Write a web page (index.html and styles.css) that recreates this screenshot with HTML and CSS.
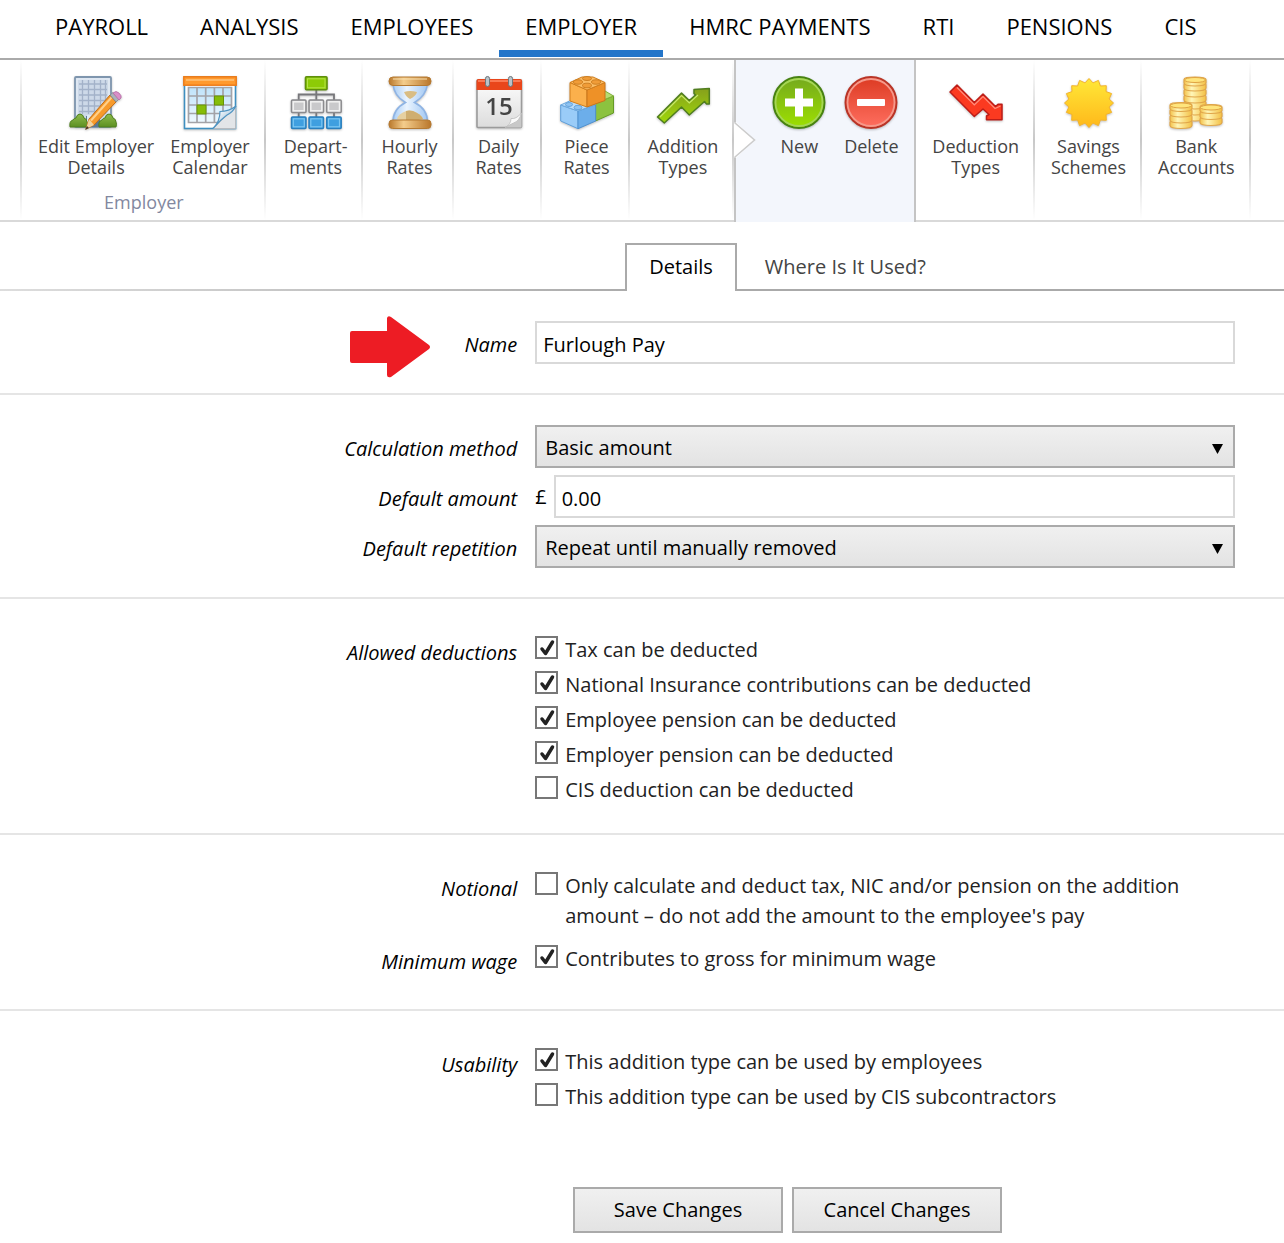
FILE: index.html
```html
<!DOCTYPE html>
<html lang="en">
<head>
    <meta charset="UTF-8">
    <meta name="viewport" content="width=device-width, initial-scale=1.0">
    <title>Addition Types</title>
    <link rel="stylesheet" href="styles.css">
</head>
<body>
    <!-- Main menu -->
    <nav class="main-nav">
        <a href="#">PAYROLL</a>
        <a href="#">ANALYSIS</a>
        <a href="#">EMPLOYEES</a>
        <a href="#" class="active">EMPLOYER</a>
        <a href="#">HMRC PAYMENTS</a>
        <a href="#">RTI</a>
        <a href="#">PENSIONS</a>
        <a href="#">CIS</a>
    </nav>

    <!-- Ribbon -->
    <div class="ribbon">
        <div class="group">
            <div class="group-items">
                <button type="button" class="tool">
                    <svg class="icon" viewBox="0 0 54 54" aria-hidden="true">
                        <defs>
                            <linearGradient id="bush" x1="0" y1="0" x2="0" y2="1"><stop offset="0" stop-color="#8fbc4c"/><stop offset="1" stop-color="#5c8f22"/></linearGradient>
                        </defs>
                        <rect x="6" y="1" width="36" height="50" rx="1" fill="#cdd9e8" stroke="#7f96ae" stroke-width="1.800"/>
                        <rect x="8" y="3" width="32" height="46" fill="none" stroke="#e4ecf5" stroke-width="1.500"/>
                        <path d="M10 8H38M10 13.500H38M10 19H38M10 24.500H38M10 30H38M10 35.500H38M13.500 4V38M19.500 4V38M25.500 4V38M31.500 4V38M36.500 4V38" stroke="#a3b2c9" stroke-width="1.300"/>
                        <path d="M17 40h14v11H17z" fill="#5b7892"/>
                        <path d="M18 39h6v9h-6z" fill="#dceaf6"/>
                        <path d="M1 51q-1-6 3-7q1-2 3-2q1-4 4-4q3 0 4 4q3 1 3 4q1 2 0 5z" fill="url(#bush)" stroke="#4f7f1e"/>
                        <path d="M30 51q-1-6 3-7q1-2 3-2q1-4 4-4q3 0 4 4q3 1 3 4q1 2 0 5z" fill="url(#bush)" stroke="#4f7f1e"/>
                        <path d="M41 19l6 7L25 49l-8 4l3-10z" fill="#f79a2b" stroke="#c06b14"/>
                        <path d="M42.500 21.500L22 44.500" stroke="#ffd08a" stroke-width="2"/>
                        <path d="M20 43l5 6l-8 4z" fill="#efd3a0"/>
                        <path d="M18 50l2 2l-4 2z" fill="#4a3a2a"/>
                        <path d="M41 19l3-2.500l6 6.500l-3 3z" fill="#a9b2ba" stroke="#7d868e" stroke-width=".8"/>
                        <path d="M44 17q3-3 6 0t2 5l-2 2z" fill="#d98fc8" stroke="#b56ba4" stroke-width=".8"/>
                    </svg>
                    <span>Edit Employer<br>Details</span>
                </button>
                <button type="button" class="tool">
                    <svg class="icon" viewBox="0 0 54 54" aria-hidden="true">
                        <defs>
                            <linearGradient id="cal" x1="0" y1="0" x2="0" y2="1"><stop offset="0" stop-color="#bfe3fa"/><stop offset="1" stop-color="#eef8ff"/></linearGradient>
                            <linearGradient id="curl" x1="0" y1="0" x2="1" y2="1"><stop offset=".2" stop-color="#fff"/><stop offset=".6" stop-color="#b5cfe3"/></linearGradient>
                        </defs>
                        <rect x="1.500" y="1" width="51" height="51.500" fill="#fff" stroke="#3f8fc0" stroke-width="1.600"/>
                        <rect x="5.500" y="11.500" width="43" height="35" fill="url(#cal)"/>
                        <path d="M5.500 11.500H48.500V46.500H5.500zM5.500 20H48.500M5.500 29H48.500M5.500 37.500H48.500M14 11.500V46.500M22.700 11.500V46.500M31.400 11.500V46.500M40 11.500V46.500" fill="none" stroke="#a3a3a8" stroke-width="1.700"/>
                        <rect x="14" y="29" width="9" height="9" fill="#86bd08" stroke="#669406"/>
                        <rect x="31.500" y="20" width="9" height="9" fill="#86bd08" stroke="#669406"/>
                        <rect x=".8" y=".8" width="52.400" height="8.400" fill="#ff9a2e" stroke="#ee7d1a" stroke-width="1.500"/>
                        <path d="M3 4H51" stroke="#ffc27a" stroke-width="1.500"/>
                        <path d="M52.500 31V52.500H30z" fill="#e2e5e8" stroke="#b6bbc0"/>
                        <path d="M30 52.500q7-7 7-17q9 0 16-5.500q-3 6-9 9q-7 5-14 13.500z" fill="url(#curl)" stroke="#4f94c2" stroke-width="1.200"/>
                    </svg>
                    <span>Employer<br>Calendar</span>
                </button>
            </div>
            <div class="group-caption">Employer</div>
        </div>
        <div class="group">
            <button type="button" class="tool">
                <svg class="icon" viewBox="0 0 54 54" aria-hidden="true">
                    <path d="M27.300 14v10M9.700 24v-5.500H45V24M9.700 36v5M27.300 36v5M45 36v5" fill="none" stroke="#77777b" stroke-width="1.800"/>
                    <rect x="16.500" y=".8" width="21.500" height="13" rx="1" fill="#8dcb06" stroke="#5f8f0c" stroke-width="1.600"/>
                    <rect x="18.500" y="2.800" width="17.500" height="9" fill="none" stroke="#b4e24a"/>
                    <g fill="#c9c9cb" stroke="#8b8b8e" stroke-width="1.500">
                        <rect x="2.500" y="24" width="14.500" height="12.500" rx="1"/>
                        <rect x="20" y="24" width="14.500" height="12.500" rx="1"/>
                        <rect x="37.700" y="24" width="14.500" height="12.500" rx="1"/>
                    </g>
                    <g fill="none" stroke="#f1f1f1" stroke-width="1.500">
                        <rect x="4.300" y="25.800" width="11" height="9"/>
                        <rect x="21.800" y="25.800" width="11" height="9"/>
                        <rect x="39.500" y="25.800" width="11" height="9"/>
                    </g>
                    <g fill="#3f9fe0" stroke="#2a7fbd" stroke-width="1.500">
                        <rect x="2.500" y="41" width="14.500" height="11.500" rx="1"/>
                        <rect x="20" y="41" width="14.500" height="11.500" rx="1"/>
                        <rect x="37.700" y="41" width="14.500" height="11.500" rx="1"/>
                    </g>
                    <g fill="none" stroke="#7cc6f2" stroke-width="1.200">
                        <rect x="4.300" y="42.800" width="11" height="8"/>
                        <rect x="21.800" y="42.800" width="11" height="8"/>
                        <rect x="39.500" y="42.800" width="11" height="8"/>
                    </g>
                </svg>
                <span>Depart-<br>ments</span>
            </button>
        </div>
        <div class="group">
            <button type="button" class="tool">
                <svg class="icon" viewBox="0 0 54 54" aria-hidden="true">
                    <defs>
                        <linearGradient id="wood" x1="0" y1="0" x2="1" y2="0"><stop offset="0" stop-color="#b9782c"/><stop offset=".35" stop-color="#f4cd8c"/><stop offset="1" stop-color="#b9762a"/></linearGradient>
                        <linearGradient id="glass" x1="0" y1="0" x2="1" y2="0"><stop offset="0" stop-color="#a9cdf5"/><stop offset=".4" stop-color="#eaf4ff"/><stop offset="1" stop-color="#a2c8f3"/></linearGradient>
                    </defs>
                    <path d="M10 8q1 12 12.500 18.500Q10 33 10 46H44.500q0-13-13-19.500Q43 20 44.500 8z" fill="url(#glass)" stroke="#8fb4e4" stroke-width="1.600"/>
                    <path d="M21 16q6-2 13 0q-1 4-7 7q-4-2-6-7z" fill="#d9bd84"/>
                    <path d="M14 43q1-5 9-8q3-1 7 0q8 3 10 8q-12 4-26 0z" fill="#e6d0a0"/>
                    <path d="M23 35q3-1 7 0q8 3 10 8q-8 2.500-17 2z" fill="#cfae70"/>
                    <rect x="6" y="1" width="42" height="8.500" rx="4" fill="url(#wood)" stroke="#b57a32"/>
                    <path d="M10 3H44" stroke="#fae0ae" stroke-width="1.200"/>
                    <rect x="6" y="44" width="42" height="8.500" rx="3.500" fill="url(#wood)" stroke="#b57a32"/>
                </svg>
                <span>Hourly<br>Rates</span>
            </button>
        </div>
        <div class="group">
            <button type="button" class="tool">
                <svg class="icon" viewBox="0 0 54 54" aria-hidden="true">
                    <defs>
                        <linearGradient id="page" x1="0" y1="0" x2="0" y2="1"><stop offset="0" stop-color="#fdfdfd"/><stop offset="1" stop-color="#dcdcdc"/></linearGradient>
                    </defs>
                    <rect x="5" y="4" width="44.500" height="47.500" rx="1" fill="url(#page)" stroke="#9b9b9b" stroke-width="1.600"/>
                    <path d="M4.500 14V5q0-2 2-2H48q2 0 2 2v9z" fill="#e9461b"/>
                    <path d="M6 5H48.500" stroke="#ff8a66" stroke-width="1.500"/>
                    <rect x="13.500" y=".5" width="4" height="10" rx="2" fill="#b9c2c8" stroke="#6d767c"/>
                    <rect x="36.500" y=".5" width="4" height="10" rx="2" fill="#b9c2c8" stroke="#6d767c"/>
                    <text x="27" y="39" class="day">15</text>
                    <path d="M33 51.500q7-2 6-9q7 1 10.500-6v15z" fill="#c8c8c8"/>
                    <path d="M33 51.500q6-3 6-9q5 1 10.500-5.500q-2 8-8 10q-4 2-8.500 4.500z" fill="#fafafa" stroke="#bcbcbc" stroke-width=".8"/>
                </svg>
                <span>Daily<br>Rates</span>
            </button>
        </div>
        <div class="group">
            <button type="button" class="tool">
                <svg class="icon" viewBox="0 0 54 54" aria-hidden="true">
                    <path d="M35.500 27L53.500 20V37L35.500 45z" fill="#8cc23f" stroke="#659a26"/>
                    <path d="M35.500 27L45 15L53.500 20z" fill="#b5dc72" stroke="#7eb036"/>
                    <path d="M.7 29V45L18 52.700V35z" fill="#9accf8" stroke="#5f9fda"/>
                    <path d="M18 35V52.700L35.700 45V28.500z" fill="#6caeea" stroke="#4e90cf"/>
                    <path d="M.7 29L14 23L35.700 28.500L18 35z" fill="#b9dcfb" stroke="#6ba8de"/>
                    <g fill="#8ec3f2" stroke="#5b9ad4" stroke-width=".8"><ellipse cx="9" cy="28.500" rx="3.500" ry="2"/><ellipse cx="18" cy="31.500" rx="4" ry="2.200"/></g>
                    <path d="M10 6.500V25L27 31V14z" fill="#fbb04c" stroke="#d17e1c"/>
                    <path d="M27 14V31L45 24.500V6.500z" fill="#ee9127" stroke="#c8741a"/>
                    <path d="M10 6.500L22 1H33L45 6.500L27 14z" fill="#fbbd66" stroke="#d17e1c"/>
                    <g fill="#f09c38" stroke="#c97a1e" stroke-width=".9"><ellipse cx="27" cy="2.500" rx="4.500" ry="2"/><ellipse cx="18" cy="6" rx="4.500" ry="2.200"/><ellipse cx="36" cy="6" rx="4.500" ry="2.200"/><ellipse cx="27" cy="9.500" rx="4.500" ry="2.300"/></g>
                </svg>
                <span>Piece<br>Rates</span>
            </button>
        </div>
        <div class="group">
            <button type="button" class="tool">
                <svg class="icon" viewBox="0 0 54 54" aria-hidden="true">
                    <defs>
                        <linearGradient id="up" x1="0" y1="0" x2="0" y2="1"><stop offset="0" stop-color="#86a01c"/><stop offset="1" stop-color="#9fd80a"/></linearGradient>
                    </defs>
                    <path d="M1.500 41L25.500 17L33.300 24.500L39.500 19L38 17.500V13.500L53.300 12.500V28H50.500L48.500 25.500L33.300 39L25.500 31L8.300 47z" fill="url(#up)" stroke="#4f7d1f" stroke-width="1.500" stroke-linejoin="round"/>
                    <path d="M4 41L25.500 19.500L33.300 27L42 19" fill="none" stroke="#c6e86a" stroke-width="1.200"/>
                </svg>
                <span>Addition<br>Types</span>
            </button>
        </div>
        <div class="group submenu">
            <svg class="notch" viewBox="0 0 22 36" aria-hidden="true"><path d="M0 0H2L21 18L2 36H0z" fill="#fff"/><path d="M1 0V1L20.500 18L1 35V36" fill="none" stroke="#ccc" stroke-width="1.600"/></svg>
            <div class="group-items">
                <button type="button" class="tool">
                    <svg class="icon" viewBox="0 0 54 54" aria-hidden="true">
                        <defs>
                            <linearGradient id="green" x1="0" y1="0" x2="0" y2="1"><stop offset="0" stop-color="#74a91e"/><stop offset="1" stop-color="#9ee000"/></linearGradient>
                        </defs>
                        <circle cx="27" cy="26.500" r="25.500" fill="url(#green)" stroke="#478212" stroke-width="2"/>
                        <circle cx="27" cy="26.500" r="23.500" fill="none" stroke="#a5d655" stroke-width="1.800"/>
                        <path d="M13 26.500H41M27 12.500V40.500" stroke="#fff" stroke-width="8"/>
                    </svg>
                    <span>New</span>
                </button>
                <button type="button" class="tool">
                    <svg class="icon" viewBox="0 0 54 54" aria-hidden="true">
                        <defs>
                            <linearGradient id="red" x1="0" y1="0" x2="0" y2="1"><stop offset="0" stop-color="#dc3a22"/><stop offset="1" stop-color="#ff6f60"/></linearGradient>
                        </defs>
                        <circle cx="27" cy="26.500" r="25.500" fill="url(#red)" stroke="#b93426" stroke-width="2"/>
                        <circle cx="27" cy="26.500" r="23.500" fill="none" stroke="#f5998b" stroke-width="1.800"/>
                        <rect x="13" y="23" width="28" height="7" rx="1" fill="#fff"/>
                    </svg>
                    <span>Delete</span>
                </button>
            </div>
        </div>
        <div class="group">
            <button type="button" class="tool">
                <svg class="icon" viewBox="0 0 54 54" aria-hidden="true">
                    <path d="M8 9L25.300 26.500L34 18L46.500 30.500L49 28.300H53V43.700H37.500V40L40 38.500L34 33L25.300 40.500L1 16z" fill="#fb3a20" stroke="#bd1d17" stroke-width="1.500" stroke-linejoin="round"/>
                    <path d="M8 11.500L25.300 29L34 20.500L46 32.500L51.500 30" fill="none" stroke="#ff8d7c" stroke-width="1.200"/>
                </svg>
                <span>Deduction<br>Types</span>
            </button>
        </div>
        <div class="group">
            <button type="button" class="tool">
                <svg class="icon" viewBox="0 0 54 54" aria-hidden="true">
                    <defs>
                        <linearGradient id="sun" x1="0" y1="0" x2="0" y2="1"><stop offset="0" stop-color="#ffe838"/><stop offset="1" stop-color="#ffb81a"/></linearGradient>
                    </defs>
                    <path d="M27 2.500L31 6.900L36.400 4.400L38.400 10L44.300 9.700L44 15.600L49.600 17.600L47.100 23L51.500 27L47.100 31L49.600 36.400L44 38.400L44.300 44.300L38.400 44L36.400 49.600L31 47.100L27 51.500L23 47.100L17.600 49.600L15.600 44L9.700 44.300L10 38.400L4.400 36.400L6.900 31L2.500 27L6.900 23L4.400 17.600L10 15.600L9.700 9.700L15.600 10L17.600 4.400L23 6.900z" fill="url(#sun)" stroke="#f3b32c" stroke-linejoin="round"/>
                </svg>
                <span>Savings<br>Schemes</span>
            </button>
        </div>
        <div class="group">
            <button type="button" class="tool">
                <svg class="icon" viewBox="0 0 54 54" aria-hidden="true">
                    <defs>
                        <linearGradient id="gold" x1="0" y1="0" x2="1" y2="0"><stop offset="0" stop-color="#f3c24a"/><stop offset=".35" stop-color="#fff6b8"/><stop offset="1" stop-color="#f3c043"/></linearGradient>
                        <path id="coin" d="M0 2.500Q0 0 11 0T22 2.500V6Q22 9 11 9T0 6z" fill="url(#gold)" stroke="#e0a64a" stroke-width="1.200"/>
                        <ellipse id="coin-top" cx="11" cy="3" rx="10.500" ry="2.500" fill="#ffe57c" stroke="#dfa343"/>
                    </defs>
                    <use href="#coin" x="15" y="36"/><use href="#coin" x="15" y="30"/><use href="#coin" x="15" y="24"/><use href="#coin" x="15" y="18"/><use href="#coin" x="15" y="12"/><use href="#coin" x="15" y="6"/><use href="#coin" x="15" y="1"/><use href="#coin-top" x="15" y="1"/>
                    <use href="#coin" x="1" y="43.500"/><use href="#coin" x="1" y="38"/><use href="#coin" x="1" y="32"/><use href="#coin" x="1" y="26.500"/><use href="#coin-top" x="1" y="26.500"/>
                    <use href="#coin" x="31" y="40.500"/><use href="#coin" x="31" y="34.500"/><use href="#coin" x="31" y="28.500"/><use href="#coin-top" x="31" y="28.500"/>
                </svg>
                <span>Bank<br>Accounts</span>
            </button>
        </div>
    </div>

    <!-- Page tabs -->
    <div class="tabs">
        <a href="#" class="tab active">Details</a>
        <a href="#" class="tab">Where Is It Used?</a>
    </div>

    <form>
        <div class="section">
            <div class="row">
                <label class="name" for="name">
                    <svg class="arrow" viewBox="0 0 80 62" aria-hidden="true"><path d="M2 15H37V2q1-3 4-1L79 29q2 2 0 4L41 61q-4 1-4-2V47H2q-2 0-2-2V17q0-2 2-2z" fill="#ed1c24"/></svg>
                    Name
                </label>
                <input type="text" class="box" id="name" value="Furlough Pay">
            </div>
        </div>

        <div class="section">
            <div class="row">
                <label class="name" for="method">Calculation method</label>
                <select id="method">
                    <option>Basic amount</option>
                </select>
            </div>
            <div class="row">
                <label class="name" for="amount">Default amount</label>
                <div class="money">
                    <span>£</span>
                    <input type="text" class="box" id="amount" value="0.00">
                </div>
            </div>
            <div class="row">
                <label class="name" for="repetition">Default repetition</label>
                <select id="repetition">
                    <option>Repeat until manually removed</option>
                </select>
            </div>
        </div>

        <div class="section section-checks">
            <div class="row">
                <span class="name">Allowed deductions</span>
                <div class="checks">
                    <label class="check"><input type="checkbox" checked><span>Tax can be deducted</span></label>
                    <label class="check"><input type="checkbox" checked><span>National Insurance contributions can be deducted</span></label>
                    <label class="check"><input type="checkbox" checked><span>Employee pension can be deducted</span></label>
                    <label class="check"><input type="checkbox" checked><span>Employer pension can be deducted</span></label>
                    <label class="check"><input type="checkbox"><span>CIS deduction can be deducted</span></label>
                </div>
            </div>
        </div>

        <div class="section section-checks">
            <div class="row">
                <span class="name">Notional</span>
                <div class="checks">
                    <label class="check"><input type="checkbox"><span>Only calculate and deduct tax, NIC and/or pension on the addition amount – do not add the amount to the employee's pay</span></label>
                </div>
            </div>
            <div class="row">
                <span class="name">Minimum wage</span>
                <div class="checks">
                    <label class="check"><input type="checkbox" checked><span>Contributes to gross for minimum wage</span></label>
                </div>
            </div>
        </div>

        <div class="section section-checks section-last">
            <div class="row">
                <span class="name">Usability</span>
                <div class="checks">
                    <label class="check"><input type="checkbox" checked><span>This addition type can be used by employees</span></label>
                    <label class="check"><input type="checkbox"><span>This addition type can be used by CIS subcontractors</span></label>
                </div>
            </div>
        </div>

        <div class="actions">
            <button type="submit">Save Changes</button>
            <button type="button">Cancel Changes</button>
        </div>
    </form>
</body>
</html>
```

FILE: styles.css
```css
* {
    box-sizing: border-box;
}

body {
    margin: 0;
    background-color: #fff;
    color: #000;
    font-family: "Segoe UI", "Open Sans", sans-serif;
    font-size: 20px;
    line-height: 30px;
}

input,
select,
button {
    font: inherit;
    color: inherit;
}

/* Main menu */
.main-nav {
    display: flex;
    padding: 0 29px;
    border-bottom: 2px solid #aaa;
}

.main-nav a {
    padding: 11px 26px 9px;
    margin-bottom: 1px;
    border-bottom: 7px solid transparent;
    color: #000;
    font-size: 22px;
    text-decoration: none;
    white-space: nowrap;
}

.main-nav a.active {
    border-bottom-color: #2375c9;
}

/* Ribbon */
.ribbon {
    display: flex;
    height: 162px;
    padding-left: 20px;
    border-bottom: 2px solid #d9d9d9;
    background: linear-gradient(#fff, #c8c8c8 50%, #fff) 20px 0 / 2px 100% no-repeat;
}

.group {
    padding: 16px 8px 0 10px;
    background: linear-gradient(#fff, #c8c8c8 50%, #fff) right / 2px 100% no-repeat;
}

.group-items {
    display: flex;
}

.group-caption {
    margin-top: 9px;
    color: #8288a0;
    font-size: 18px;
    text-align: center;
}

.tool {
    padding: 0 8px;
    border: none;
    background: none;
    color: #444;
    font-size: 18px;
    line-height: 21px;
    text-align: center;
    white-space: nowrap;
    cursor: pointer;
}

.tool span {
    display: block;
}

.icon {
    display: block;
    width: 54px;
    height: 54px;
    margin: 0 auto 6px;
    overflow: visible;
    filter: drop-shadow(0 1px 1px rgba(0, 0, 0, 0.25));
}

.day {
    fill: #444;
    font-size: 24px;
    font-weight: 600;
    text-anchor: middle;
}

.submenu {
    position: relative;
    height: 162px;
    padding: 16px 7px 0 27px;
    border: solid #c4c4c4;
    border-width: 0 2px;
    background: #f3f6fc;
}

.submenu .tool {
    min-width: 72px;
}

.submenu ~ .group {
    padding-left: 8px;
}

/* Points from Addition Types to its submenu */
.notch {
    position: absolute;
    top: 62px;
    left: -2px;
    width: 22px;
    height: 36px;
}

/* Page tabs */
.tabs {
    display: flex;
    justify-content: center;
    padding: 21px 0 0 295px;
    background: linear-gradient(to right, #ddd, #aaa 50%) bottom / 100% 2px no-repeat;
}

.tab {
    padding: 7px 26px 9px;
    border: 2px solid transparent;
    border-bottom: none;
    color: #444;
    text-decoration: none;
}

.tab.active {
    padding: 7px 22px 9px;
    border-color: #aaa;
    background-color: #fff;
    color: #000;
}

/* Form */
.section {
    display: grid;
    gap: 7px;
    padding: 30px 49px 29px 0;
    border-bottom: 2px solid #e5e5e5;
}

.section-checks {
    padding-bottom: 28px;
}

.section-last {
    border-bottom: none;
}

.row {
    display: grid;
    grid-template-columns: 17fr 23fr;
    column-gap: 18px;
    min-height: 43px;
}

.name {
    position: relative;
    justify-self: end;
    line-height: 47px;
    height: 43px;
    font-style: italic;
}

.arrow {
    position: absolute;
    right: calc(100% + 34px);
    top: -5px;
    width: 80px;
    height: 62px;
}

.box {
    width: 100%;
    height: 43px;
    padding: 4px 6px 0;
    border: 2px solid #d9d9d9;
    background-color: #fff;
}

select {
    width: 100%;
    height: 43px;
    padding: 2px 8px 0;
    border: 2px solid #aaa;
    border-radius: 0;
    appearance: none;
    background: url("data:image/svg+xml,%3Csvg xmlns='http://www.w3.org/2000/svg' width='11' height='11'%3E%3Cpath d='M0 1H11L5.500 11z'/%3E%3C/svg%3E") right 10px top 16px no-repeat, linear-gradient(#f0f0f0, #e3e3e3);
}

.money {
    display: flex;
    align-items: center;
    gap: 7px;
}

.checks {
    display: grid;
    align-content: start;
    gap: 5px;
    padding-top: 6px;
}

.check {
    display: flex;
    align-items: flex-start;
    gap: 7px;
    color: #222;
}

.check input {
    flex: none;
    width: 23px;
    height: 23px;
    margin: 1px 0 0;
    border: 2px solid #777;
    appearance: none;
    background-color: #fff;
}

.check input:checked {
    background-image: url("data:image/svg+xml,%3Csvg xmlns='http://www.w3.org/2000/svg' width='19' height='19'%3E%3Cpath d='M5 11L8.500 15.500L15.500 4' fill='none' stroke='%23222' stroke-width='3.500' stroke-linecap='round' stroke-linejoin='round'/%3E%3C/svg%3E");
}

.actions {
    display: flex;
    justify-content: center;
    gap: 9px;
    padding: 47px 0 10px 291px;
}

.actions button {
    width: 210px;
    height: 46px;
    border: 2px solid #aaa;
    background: linear-gradient(#f0f0f0, #e3e3e3);
}
```
